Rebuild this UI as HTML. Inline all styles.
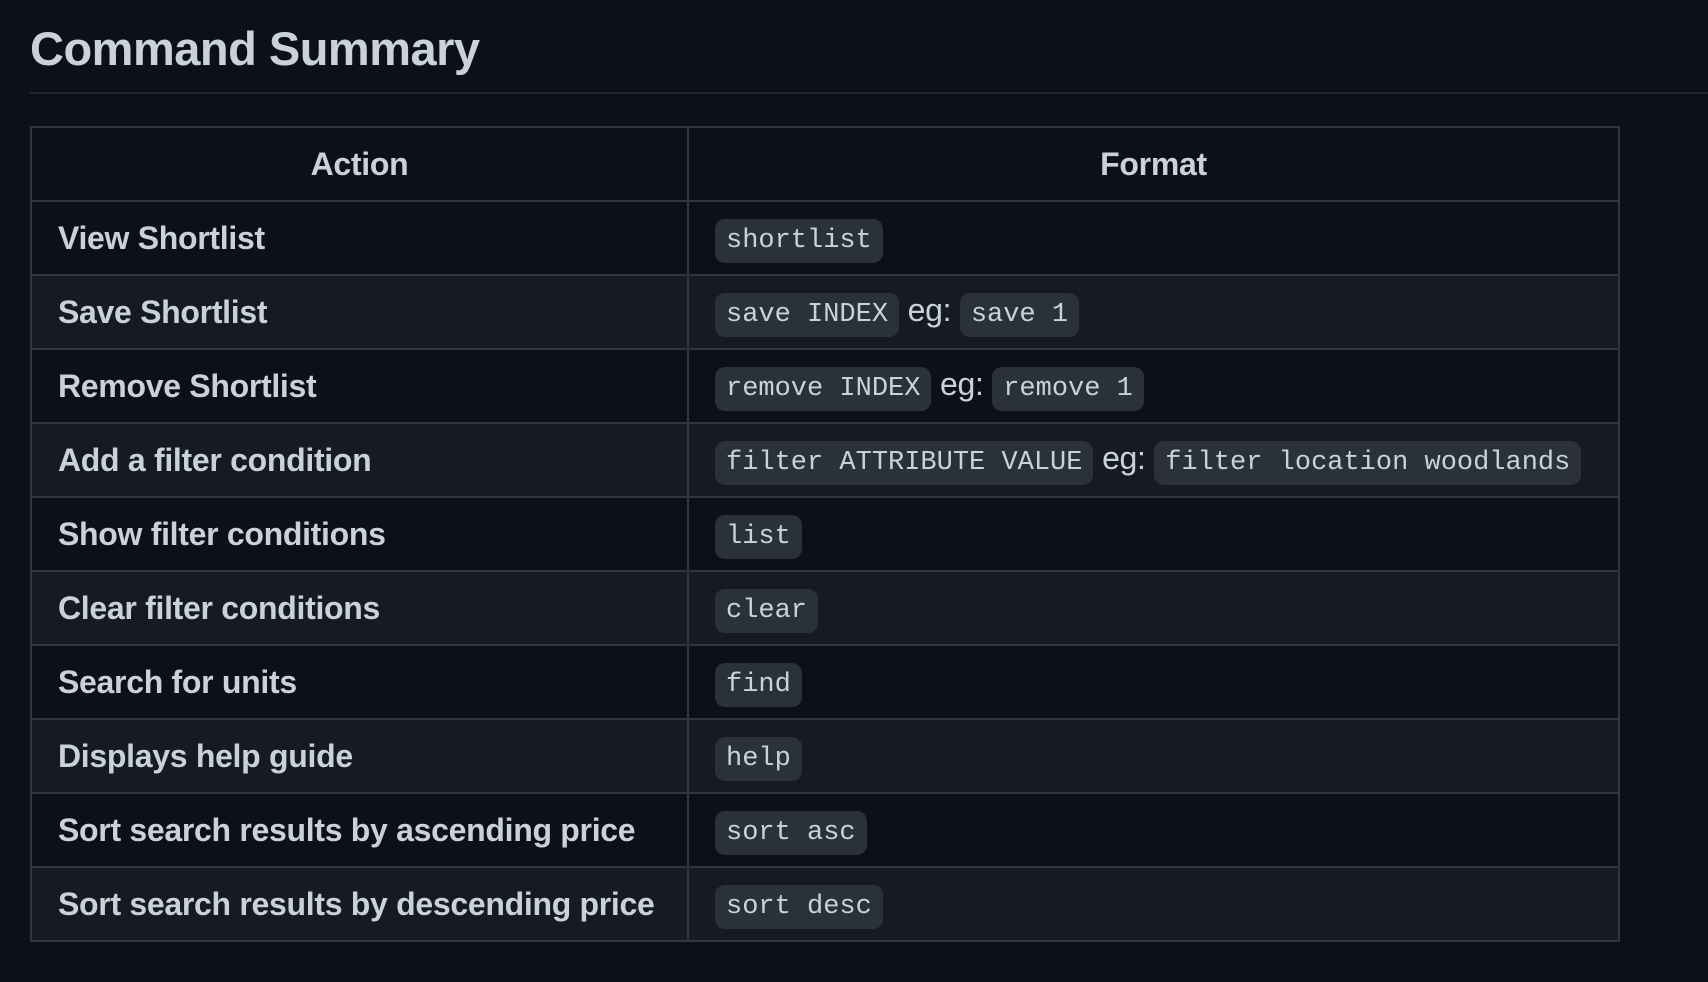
<!DOCTYPE html>
<html><head><meta charset="utf-8"><style>
html,body{margin:0;padding:0;background:#0d1117;width:1708px;height:982px;overflow:hidden;font-family:"Liberation Sans",sans-serif;color:#c9d1d9}
h2{position:absolute;left:30px;top:19px;margin:0;font-size:47px;font-weight:700;letter-spacing:-0.5px;line-height:60px}
.rule{position:absolute;left:30px;right:0;top:92px;height:2px;background:#21262d}
table{position:absolute;left:30px;top:126px;width:1588px;border-collapse:collapse;table-layout:fixed}
td,th{border:2px solid #30363d;height:74px;padding:0 26px;font-size:32px;font-weight:700;letter-spacing:-0.3px;white-space:nowrap;box-sizing:border-box;vertical-align:middle;line-height:40px}
th{text-align:center}
tbody tr:nth-child(odd) td{background:#0d1117}
tbody tr:nth-child(even) td{background:#161b22}
code{font-family:"Liberation Mono",monospace;font-size:27px;font-weight:400;letter-spacing:0;background:#2b3138;border-radius:10px;padding:7px 11px}
.eg{font-weight:400}
</style></head><body>
<h2>Command Summary</h2>
<div class="rule"></div>
<table>
<colgroup><col style="width:657px"><col style="width:931px"></colgroup>
<thead><tr><th>Action</th><th>Format</th></tr></thead>
<tbody>
<tr><td>View Shortlist</td><td><code>shortlist</code></td></tr>
<tr><td>Save Shortlist</td><td><code>save INDEX</code> <span class="eg">eg:</span> <code>save 1</code></td></tr>
<tr><td>Remove Shortlist</td><td><code>remove INDEX</code> <span class="eg">eg:</span> <code>remove 1</code></td></tr>
<tr><td>Add a filter condition</td><td><code>filter ATTRIBUTE VALUE</code> <span class="eg">eg:</span> <code>filter location woodlands</code></td></tr>
<tr><td>Show filter conditions</td><td><code>list</code></td></tr>
<tr><td>Clear filter conditions</td><td><code>clear</code></td></tr>
<tr><td>Search for units</td><td><code>find</code></td></tr>
<tr><td>Displays help guide</td><td><code>help</code></td></tr>
<tr><td>Sort search results by ascending price</td><td><code>sort asc</code></td></tr>
<tr><td>Sort search results by descending price</td><td><code>sort desc</code></td></tr>
</tbody></table>
</body></html>
